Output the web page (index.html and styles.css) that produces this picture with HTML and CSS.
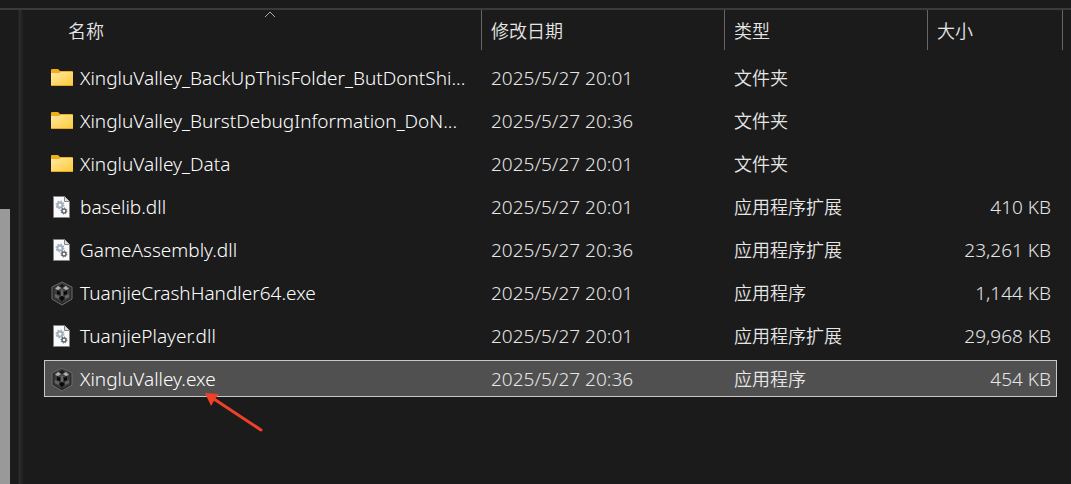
FILE: index.html
```
<!DOCTYPE html>
<html lang="zh-CN">
<head>
    <meta charset="utf-8">
    <title>XingluValley</title>
    <link rel="stylesheet" href="styles.css">
</head>
<body>
    <!-- shared icons -->
    <svg class="defs" aria-hidden="true">
        <defs>
            <linearGradient id="folderFill" x1="0" y1="0" x2="1" y2="1">
                <stop offset="0" stop-color="#ffe9a3"/>
                <stop offset="1" stop-color="#fcc937"/>
            </linearGradient>
        </defs>
        <symbol id="folder" viewBox="0 0 24 26">
            <path d="M1 5q0-1 1-1h6l2 2h12q1 0 1 1v4H1z" fill="#f2ae18"/>
            <path d="M1 8h8l2-1h12v13q0 1-1 1H2q-1 0-1-1z" fill="url(#folderFill)"/>
            <path d="M1 20h22q0 1-1 1H2q-1 0-1-1z" fill="#e5aa22"/>
        </symbol>
        <symbol id="dll" viewBox="0 0 24 26">
            <path d="M3.5 2.5h11l5 5v16h-16z" fill="#fafafa" stroke="#858585"/>
            <path d="M14.5 2.5v5h5" fill="#ddd" stroke="#858585"/>
            <circle cx="10" cy="11" r="2.5" fill="none" stroke="#a3afbd" stroke-width="2"/>
            <circle cx="10" cy="11" r="3.7" fill="none" stroke="#a3afbd" stroke-width="1.5" stroke-dasharray="1.5 1.4"/>
            <circle cx="14" cy="17" r="2" fill="none" stroke="#5b6671" stroke-width="1.5"/>
            <circle cx="14" cy="17" r="3" fill="none" stroke="#5b6671" stroke-width="1" stroke-dasharray="1.2 1.1"/>
        </symbol>
        <symbol id="cube" viewBox="0 0 24 26">
            <path d="M12 2l10 5v12l-10 6-10-6V7z" fill="#2c2c2c" stroke="#6c6c6c"/>
            <path d="M12 3l8 5-8 4-8-4z" fill="#484848"/>
            <path d="M4 9l7 4v9l-7-4zM20 9l-7 4v9l7-4z" fill="#3c3c3c"/>
            <path d="M5 9l3-3 3 2-3 2zM13 8l3-2 3 3-3 1z" fill="#b0b0b0"/>
            <path d="M9 6l3-2 3 2-3 2z" fill="#1a1a1a"/>
            <path d="M7 11l3 1v3l-3-1zM14 12l3-1v3l-3 1zM9 18l3-2 3 2-3 3z" fill="#080808"/>
            <path d="M11 10h2v6h-2zM5 14l4 2v3l-4-2zM15 16l4-2v3l-4 2z" fill="#666"/>
        </symbol>
    </svg>

    <div class="toolbar"></div>
    <div class="explorer">
        <div class="sidebar"><div class="scroll-thumb"></div></div>
        <div class="splitter"></div>
        <main class="content">
            <table class="files">
                <thead>
                    <tr>
                        <th scope="col" class="name">名称
                            <svg class="sort" width="14" height="7" viewBox="0 0 14 7"><path d="M2 6l5-5 5 5" fill="none" stroke="#aaa"/></svg>
                        </th>
                        <th scope="col">修改日期</th>
                        <th scope="col">类型</th>
                        <th scope="col">大小</th>
                    </tr>
                </thead>
                <tbody>
                    <tr>
                        <td class="name"><svg class="icon"><use href="#folder"/></svg><span>XingluValley_BackUpThisFolder_ButDontShi...</span></td>
                        <td>2025/5/27 20:01</td>
                        <td class="type">文件夹</td>
                        <td class="size"></td>
                    </tr>
                    <tr>
                        <td class="name"><svg class="icon"><use href="#folder"/></svg><span>XingluValley_BurstDebugInformation_DoN...</span></td>
                        <td>2025/5/27 20:36</td>
                        <td class="type">文件夹</td>
                        <td class="size"></td>
                    </tr>
                    <tr>
                        <td class="name"><svg class="icon"><use href="#folder"/></svg><span>XingluValley_Data</span></td>
                        <td>2025/5/27 20:01</td>
                        <td class="type">文件夹</td>
                        <td class="size"></td>
                    </tr>
                    <tr>
                        <td class="name"><svg class="icon"><use href="#dll"/></svg><span>baselib.dll</span></td>
                        <td>2025/5/27 20:01</td>
                        <td class="type">应用程序扩展</td>
                        <td class="size">410 KB</td>
                    </tr>
                    <tr>
                        <td class="name"><svg class="icon"><use href="#dll"/></svg><span>GameAssembly.dll</span></td>
                        <td>2025/5/27 20:36</td>
                        <td class="type">应用程序扩展</td>
                        <td class="size">23,261 KB</td>
                    </tr>
                    <tr>
                        <td class="name"><svg class="icon"><use href="#cube"/></svg><span>TuanjieCrashHandler64.exe</span></td>
                        <td>2025/5/27 20:01</td>
                        <td class="type">应用程序</td>
                        <td class="size">1,144 KB</td>
                    </tr>
                    <tr>
                        <td class="name"><svg class="icon"><use href="#dll"/></svg><span>TuanjiePlayer.dll</span></td>
                        <td>2025/5/27 20:01</td>
                        <td class="type">应用程序扩展</td>
                        <td class="size">29,968 KB</td>
                    </tr>
                    <tr class="selected">
                        <td class="name"><svg class="icon"><use href="#cube"/></svg><span>XingluValley.exe</span>
                            <svg class="arrow" width="60" height="42" viewBox="0 0 60 42">
                                <path d="M10 7l47 31" stroke="#ee4128" stroke-width="3" stroke-linecap="round"/>
                                <path d="M1 1l14 1-4 5-4 7z" fill="#ee4128"/>
                            </svg>
                        </td>
                        <td>2025/5/27 20:36</td>
                        <td class="type">应用程序</td>
                        <td class="size">454 KB</td>
                    </tr>
                </tbody>
            </table>
        </main>
    </div>
</body>
</html>
```
FILE: styles.css
```
* {
    box-sizing: border-box;
}

body {
    margin: 0;
    min-height: 100vh;
    display: flex;
    flex-direction: column;
    background-color: #1b1b1b;
    color: #e6e6e6;
    font-family: "Noto Sans", "Noto Sans CJK SC", sans-serif;
    font-size: 19px;
    font-weight: 350;
    line-height: 24px;
}

.defs {
    position: absolute;
    width: 0;
    height: 0;
}

.toolbar {
    height: 10px;
    border-bottom: 2px solid #3b3b3b;
}

.explorer {
    flex: 1;
    display: flex;
}

.sidebar {
    width: 18px;
    display: flex;
    padding-top: 199px;
}

.scroll-thumb {
    width: 10px;
    background-color: #999;
}

.splitter {
    width: 5px;
    background-color: #2b2b2b;
    border-left: 1px solid #222;
    border-right: 2px solid #222;
}

.content {
    flex: 1;
    min-width: 0;
    padding: 0 8px 0 21px;
}

.files,
.files thead {
    display: block;
}

.files tbody {
    display: grid;
    gap: 6px;
    padding: 9px 6px 0 0;
}

.files tr {
    display: grid;
    grid-template-columns: minmax(0, 1fr) 243px 203px 135px;
}

.files tbody tr {
    position: relative;
    height: 37px;
    grid-template-columns: minmax(0, 1fr) 243px 203px 129px;
    align-items: center;
}

.files th {
    height: 40px;
    padding: 9px 9px 7px;
    border-right: 1px solid #666;
    font-size: 18px;
    font-weight: 350;
    text-align: left;
}

.files th.name {
    position: relative;
    padding-left: 24px;
}

.sort {
    position: absolute;
    top: 1px;
    left: 50%;
}

.files td {
    padding: 0 9px;
    white-space: nowrap;
}

.files td.name {
    display: flex;
    align-items: center;
    gap: 6px;
    padding: 0 0 0 6px;
    color: #fff;
}

.icon {
    flex: none;
    width: 24px;
    height: 26px;
}

.files td.type {
    font-size: 18px;
}

.files td.size {
    padding-right: 6px;
    text-align: right;
}

.selected::before {
    content: "";
    position: absolute;
    inset: 0;
    z-index: -1;
    background-color: #505050;
    border: 1px solid #c8c8c8;
}

.arrow {
    position: absolute;
    left: 160px;
    top: 32px;
}
```
